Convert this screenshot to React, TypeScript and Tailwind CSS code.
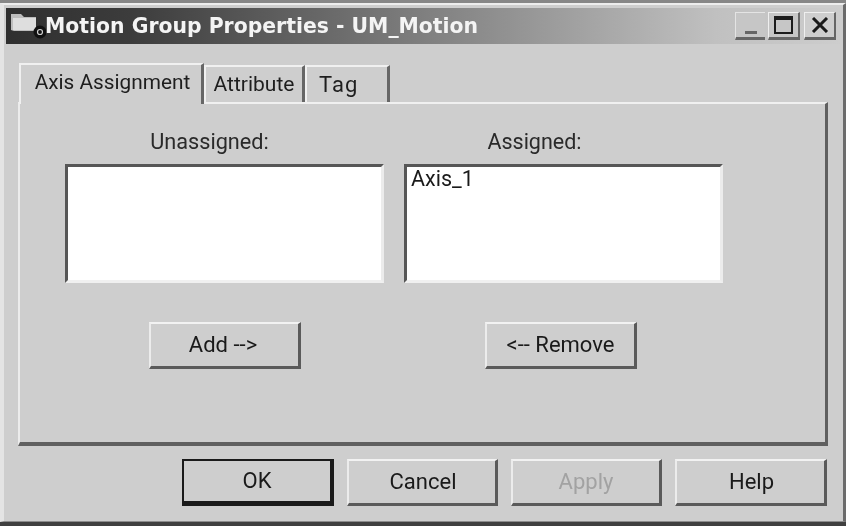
import React from "react";

const sans = "font-['Roboto','Liberation_Sans',Arial,sans-serif]";

function Btn({ label, className = "", wClass = "w-[151px]", disabled = false, def = false }: { label: string; className?: string; wClass?: string; disabled?: boolean; def?: boolean }) {
  return (
    <div
      className={`${wClass} flex items-center justify-center text-[22px] leading-none ${
        def
          ? "border-2 border-b-[5px] border-r-[4px] border-[#1a1a1a]"
          : "border-2 border-t-[#f2f2f2] border-l-[#ececec] border-r-[#5a5a5a] border-r-[3px] border-b-[#5a5a5a] border-b-[3px]"
      } ${disabled ? "text-[#a2a2a2]" : "text-[#1a1a1a]"} ${className}`}
    >
      {label}
    </div>
  );
}

function ListBox({ items = [] as string[] }) {
  return (
    <div className="h-[119px] w-[319px] border-[3px] border-t-[#565656] border-l-[#565656] border-r-[#ececec] border-b-[#f0f0f0] bg-white pl-[4px] text-[21.5px] leading-[24px] text-[#1a1a1a]">
      {items.map((t) => (
        <div key={t}>{t}</div>
      ))}
    </div>
  );
}

export default function App() {
  return (
    <div className="h-[526px] w-[846px] overflow-hidden bg-[#878787]">
      <div className={`${sans} flex h-[526px] w-[846px] flex-col overflow-hidden border-t-[3px] border-b-[4px] border-t-[#878787] border-b-[#3f3f3f] bg-[#cecece] blur-[0.5px]`}>
        <div className="flex min-h-0 flex-1 flex-col border-t-2 border-l-[4px] border-r-[3px] border-b border-t-[#ededed] border-l-[#e4e4e4] border-r-[#6b6b6b] border-b-[#8c8c8c] pl-[2px]">
          {/* Title bar */}
          <div className="mt-[3px] mr-[3px] flex h-[36px] items-center bg-[linear-gradient(90deg,#2f2f2f_0%,#3c3c3c_15%,#7f7f7f_50%,#c0c0c0_85%,#cdcdcd_100%)] pl-[5px] pr-[4px]">
            <svg width="36" height="30" viewBox="0 0 36 30" className="mr-[-1px] ml-[-1px] shrink-0">
              <path d="M1 3h10l3 3h12v14H4L1 19z" fill="#bdbdbd" />
              <path d="M3 7h23v12H3z" fill="#dedede" />
              <circle cx="30" cy="21" r="6.5" fill="#111" />
              <circle cx="30" cy="21" r="2.5" fill="none" stroke="#cfcfcf" strokeWidth="1.2" />
            </svg>
            <span className="font-['DejaVu_Sans',sans-serif] text-[20.4px] font-bold leading-none whitespace-nowrap text-[#f4f4f4]">
              Motion Group Properties - UM_Motion
            </span>
            <div className="ml-auto flex items-center">
              <div className="flex h-[28px] w-[30px] items-end justify-center border-t border-l border-t-[#e4e4e4] border-l-[#e4e4e4] border-b-[3px] border-b-[#666] bg-[#c6c6c6] pb-[3px]">
                <div className="h-[3px] w-[12px] bg-[#666]" />
              </div>
              <div className="ml-[3px] flex h-[28px] w-[32px] items-center justify-center border-t border-l border-t-[#efefef] border-l-[#efefef] border-r-2 border-r-[#666] border-b-[3px] border-b-[#666] bg-[#c6c6c6]">
                <div className="h-[18px] w-[19px] border-2 border-t-[4px] border-[#1c1c1c]" />
              </div>
              <div className="ml-[4px] flex h-[28px] w-[32px] items-center justify-center border-t border-l border-t-[#efefef] border-l-[#efefef] border-r-2 border-r-[#666] border-b-[3px] border-b-[#666] bg-[#cecece]">
                <svg width="18" height="16" viewBox="0 0 18 16">
                  <path d="M2 1l14 14M16 1L2 15" stroke="#1a1a1a" strokeWidth="3" />
                </svg>
              </div>
            </div>
          </div>

          {/* Tabs */}
          <div className="mt-[17px] ml-[13px] flex h-[41px] items-end">
            <div className="z-10 mb-[-2px] flex h-[41px] w-[185px] items-start justify-center border-t-2 border-l-2 border-r-[3px] border-t-[#f0f0f0] border-l-[#f0f0f0] border-r-[#666] bg-[#cecece] pt-[7px] pl-[3px] text-[20.8px] leading-none whitespace-nowrap text-[#1e1e1e]">
              Axis Assignment
            </div>
            <div className="flex h-[37px] w-[101px] items-start justify-center border-t-2 border-l-2 border-r-[3px] border-t-[#f0f0f0] border-l-[#f0f0f0] border-r-[#666] pt-[7px] text-[21px] leading-none text-[#1e1e1e]">
              Attribute
            </div>
            <div className="flex h-[37px] w-[85px] items-start justify-start border-t-2 border-l-2 border-r-[3px] border-t-[#f0f0f0] border-l-[#f0f0f0] border-r-[#666] pt-[7px] pl-[12px] text-[22px] leading-none tracking-[1px] text-[#1e1e1e]">
              Tag
            </div>
          </div>

          {/* Panel */}
          <div className="ml-[12px] h-[344px] w-[810px] border-2 border-r-[3px] border-b-[4px] border-t-[#f0f0f0] border-l-[#ececec] border-r-[#606060] border-b-[#606060] pl-[45px]">
            <div className="grid w-[658px] grid-cols-[319px_319px] gap-x-[20px]">
              <div className="mt-[25px] mb-[9px] pr-[30px] text-center text-[21.7px] leading-[26px] text-[#2a2a2a]">Unassigned:</div>
              <div className="mt-[25px] mb-[9px] pr-[58px] text-center text-[21.5px] leading-[26px] text-[#2a2a2a]">Assigned:</div>
              <ListBox />
              <ListBox items={["Axis_1"]} />
              <div className="mt-[39px] ml-[84px]">
                <Btn label="Add -->" wClass="w-[152px]" className="h-[47px] pr-[3px]" />
              </div>
              <div className="mt-[39px] ml-[81px]">
                <Btn label="<-- Remove" wClass="w-[152px]" className="h-[47px]" />
              </div>
            </div>
          </div>

          {/* Footer */}
          <div className="mt-[13px] mr-[16px] flex justify-end gap-[13px]">
            <Btn label="OK" def wClass="w-[152px]" className="h-[47px]" />
            <Btn label="Cancel" className="h-[47px] pl-[2px]" />
            <Btn label="Apply" disabled className="h-[47px]" />
            <Btn label="Help" wClass="w-[152px]" className="h-[47px] pl-[2px]" />
          </div>
        </div>
      </div>
    </div>
  );
}
